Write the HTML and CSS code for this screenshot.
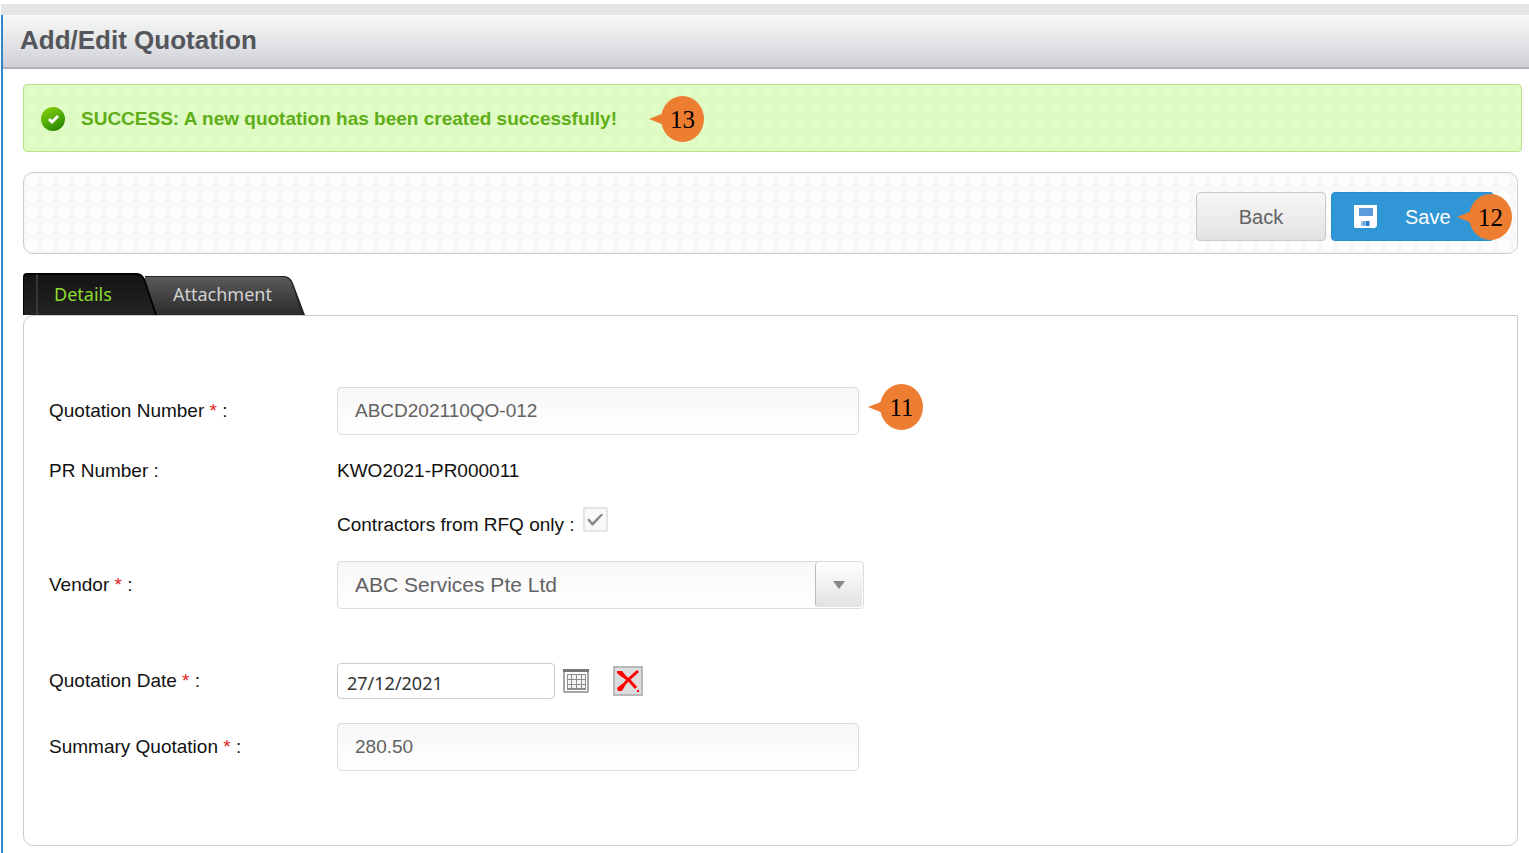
FILE: index.html
```html
<!DOCTYPE html>
<html lang="en">
<head>
    <meta charset="UTF-8">
    <title>Add/Edit Quotation</title>
    <link rel="stylesheet" href="styles.css">
</head>
<body>
    <div class="top-strip"></div>
    <div class="page">
        <header class="page-header">
            <h1>Add/Edit Quotation</h1>
        </header>

        <main class="content">
            <div class="alert" role="status">
                <svg class="alert-icon" viewBox="0 0 24 24">
                    <defs>
                        <linearGradient id="okFill" x1="0" y1="0" x2="0.6" y2="1">
                            <stop offset="0" stop-color="#8ed400"/>
                            <stop offset="0.5" stop-color="#5cb30a"/>
                            <stop offset="1" stop-color="#2d8a00"/>
                        </linearGradient>
                    </defs>
                    <circle cx="12" cy="12" r="12" fill="url(#okFill)"/>
                    <path d="M8 12l3 3 6-6" fill="none" stroke="#fff" stroke-width="3"/>
                </svg>
                <span class="alert-text">SUCCESS: A new quotation has been created successfully!</span>
                <span class="callout">13</span>
            </div>

            <div class="toolbar">
                <button type="button" class="btn">Back</button>
                <button type="submit" form="quotationForm" class="btn btn-save">
                    <svg class="save-icon" viewBox="0 0 24 24">
                        <path d="M0 0h23v21l-2 2H1l-1-1z" fill="#fff"/>
                        <path d="M5 3h14v8H5z" fill="#5c9bdc"/>
                        <path d="M8 16h8v5H7v-4z" fill="#8fbdea"/>
                        <path d="M12 16h3v5h-3z" fill="#2f7ccc"/>
                        <path d="M9 17h2v3H9z" fill="#5c9bdc"/>
                    </svg>
                    Save
                </button>
                <span class="callout callout-over">12</span>
            </div>

            <nav class="tabs">
                <a href="#details" class="tab active">
                    <svg class="tab-shape" viewBox="0 0 134 42" preserveAspectRatio="none">
                        <defs>
                            <linearGradient id="tabDark" x1="0" y1="0" x2="0" y2="1">
                                <stop offset="0" stop-color="#141414"/>
                                <stop offset="1" stop-color="#232323"/>
                            </linearGradient>
                        </defs>
                        <path d="M0 42V4q0-4 4-4h110q5 0 8 6l12 36z" fill="#000"/>
                        <path d="M1 42V5q0-3 4-3h108q5 0 8 6l11 34z" fill="url(#tabDark)"/>
                        <path d="M14 1v41" stroke="#555" stroke-width="1"/>
                    </svg>
                    <span>Details</span>
                </a>
                <a href="#attachment" class="tab">
                    <svg class="tab-shape" viewBox="0 0 160 39" preserveAspectRatio="none">
                        <defs>
                            <linearGradient id="tabGrey" x1="0" y1="0" x2="0" y2="1">
                                <stop offset="0" stop-color="#5a5a5a"/>
                                <stop offset="1" stop-color="#2b2b2b"/>
                            </linearGradient>
                        </defs>
                        <path d="M0 39V0h139q6 0 9 7l12 32z" fill="#222"/>
                        <path d="M0 39V1h138q6 0 9 7l10 31z" fill="url(#tabGrey)"/>
                    </svg>
                    <span>Attachment</span>
                </a>
            </nav>

            <form id="quotationForm" class="panel">
                <div class="form-row">
                    <label for="quotationNumber">Quotation Number <span class="required">*</span> :</label>
                    <div class="field">
                        <input type="text" id="quotationNumber" class="text-input" value="ABCD202110QO-012" readonly>
                        <span class="callout">11</span>
                    </div>
                </div>

                <div class="form-row">
                    <span>PR Number :</span>
                    <div class="field">KWO2021-PR000011</div>
                </div>

                <div class="form-row">
                    <div class="field field-check">
                        <label for="rfqOnly">Contractors from RFQ only :</label>
                        <input type="checkbox" id="rfqOnly" checked>
                    </div>
                </div>

                <div class="form-row">
                    <label for="vendor">Vendor <span class="required">*</span> :</label>
                    <div class="field">
                        <div class="select-box">
                            <select id="vendor">
                                <option>ABC Services Pte Ltd</option>
                            </select>
                            <span class="select-arrow"></span>
                        </div>
                    </div>
                </div>

                <div class="form-row row-date">
                    <label for="quotationDate">Quotation Date <span class="required">*</span> :</label>
                    <div class="field">
                        <input type="text" id="quotationDate" class="date-input" value="27/12/2021">
                        <button type="button" class="icon-btn" aria-label="Choose date">
                            <svg width="26" height="24" viewBox="0 0 26 24">
                                <rect x="1" y="1" width="24" height="22" rx="1" fill="#fff" stroke="#a5a5a5" stroke-width="2"/>
                                <path d="M0 0h26v3H0z" fill="#777"/>
                                <path d="M4 5h19v16H4z" fill="#8c8c8c"/>
                                <path d="M5 6h3v4H5zM9 6h4v4H9zM14 6h4v4h-4zM19 6h3v4h-3zM5 11h3v4H5zM9 11h4v4H9zM14 11h4v4h-4zM19 11h3v4h-3zM5 16h3v3H5zM9 16h4v3H9zM14 16h4v3h-4zM19 16h3v3h-3z" fill="#f4f4f4"/>
                            </svg>
                        </button>
                        <button type="button" class="icon-btn icon-clear" aria-label="Clear date">
                            <svg width="30" height="30" viewBox="0 0 30 30">
                                <rect x="1" y="1" width="28" height="28" fill="#dcdcdc" stroke="#b8b8b8" stroke-width="2"/>
                                <path d="M6 7l10 7 7 8" fill="none" stroke="#f00" stroke-width="3"/>
                                <path d="M25 5l-10 9-9 10" fill="none" stroke="#f00" stroke-width="3"/>
                                <path d="M4 5h5l5 6-2 2-8-6zM4 22l5-4 3 2-3 5H5z" fill="#f00"/>
                                <path d="M24 24h2v2h-2z" fill="#f00"/>
                            </svg>
                        </button>
                    </div>
                </div>

                <div class="form-row">
                    <label for="summary">Summary Quotation <span class="required">*</span> :</label>
                    <div class="field">
                        <input type="text" id="summary" class="text-input" value="280.50" readonly>
                    </div>
                </div>
            </form>
        </main>
    </div>
</body>
</html>
```

FILE: styles.css
```css
* {
    margin: 0;
    padding: 0;
    box-sizing: border-box;
}

body {
    display: flex;
    flex-direction: column;
    min-height: 100vh;
    background: #fff;
    color: #111;
    font-family: "Liberation Sans", Arial, sans-serif;
    font-size: 19px;
    line-height: 24px;
}

input,
select,
button {
    font: inherit;
}

.top-strip {
    height: 11px;
    margin: 4px 0 0 1px;
    background: #e4e5e7;
}

.page {
    flex: 1;
    margin-left: 1px;
    border-left: 2px solid #2e86cc;
}

.page-header {
    padding: 9px 17px 11px;
    background: linear-gradient(#f7f9f8, #d0d1d6);
    border-bottom: 2px solid #b0b1b9;
}

h1 {
    color: #54565b;
    font-size: 26px;
    line-height: 32px;
}

.content {
    padding: 15px 11px 7px 20px;
}

/* success message */
.alert {
    display: flex;
    align-items: center;
    height: 68px;
    margin-right: -4px;
    padding: 2px 17px 0;
    background: radial-gradient(circle, #e1fcc7 5px, #dcfac0 8px, #dffbc5 11px) 0 0 / 16px 16px;
    border: 1px solid #b5e28a;
    border-radius: 4px;
    color: #5fae17;
    font-weight: bold;
}

.alert-icon {
    width: 24px;
    height: 24px;
    margin-right: 16px;
}

.alert .callout {
    margin-left: 44px;
}

/* numbered markers */
.callout {
    position: relative;
    width: 43px;
    height: 46px;
    background: #ed7d31;
    border-radius: 50%;
    color: #000;
    font-family: "Liberation Serif", "Times New Roman", serif;
    font-size: 25px;
    font-weight: normal;
    line-height: 48px;
    text-align: center;
}

.callout::before {
    content: "";
    position: absolute;
    left: -12px;
    top: 17px;
    border: solid transparent;
    border-width: 6px 15px 6px 0;
    border-right-color: #ed7d31;
}

.callout-over {
    position: absolute;
    top: 21px;
    right: 5px;
}

.toolbar {
    position: relative;
    display: flex;
    justify-content: flex-end;
    gap: 5px;
    margin: 20px 0 19px;
    padding: 19px 23px 12px;
    background: radial-gradient(circle, #fefefe 5px, #f6f6f6 8px, #fcfcfc 11px) 0 0 / 16px 16px;
    border: 1px solid #ccc;
    border-radius: 10px;
}

.btn {
    width: 130px;
    height: 49px;
    background: linear-gradient(#f7f6f7, #e4e2e3);
    border: 1px solid #c8c8c8;
    border-radius: 4px;
    color: #626262;
    font-size: 20px;
    cursor: pointer;
}

.btn-save {
    display: flex;
    align-items: center;
    gap: 27px;
    width: 163px;
    padding: 0 22px;
    background: #3096d5;
    border-color: #2b8fce;
    color: #fff;
}

.save-icon {
    width: 24px;
    height: 24px;
}

.tabs {
    display: flex;
    align-items: flex-end;
    font-family: "Noto Sans", "Segoe UI", sans-serif;
    font-size: 18px;
}

.tab {
    position: relative;
    width: 160px;
    height: 39px;
    margin-left: -12px;
    padding: 6px 0 0 28px;
    color: #d2d2d2;
    text-decoration: none;
}

.tab.active {
    z-index: 1;
    width: 134px;
    height: 42px;
    margin-left: 0;
    padding: 9px 0 0 31px;
    color: #8fdc2a;
}

.tab-shape {
    position: absolute;
    left: 0;
    top: 0;
    width: 100%;
    height: 100%;
}

.tab span {
    position: relative;
}

/* form */
.panel {
    display: flex;
    flex-direction: column;
    padding: 71px 25px 74px;
    border: 1px solid #ccc;
    border-radius: 10px 0 10px 10px;
}

.form-row {
    display: grid;
    grid-template-columns: 288px 1fr;
    align-items: center;
    margin-bottom: 24px;
}

.form-row:last-child {
    margin-bottom: 0;
}

.row-date {
    margin-top: 30px;
}

.required {
    color: #e02020;
}

.field {
    grid-column: 2;
    display: flex;
    align-items: center;
}

.field-check {
    align-items: flex-start;
    gap: 8px;
}

.field-check label {
    padding-top: 6px;
}

.text-input {
    width: 522px;
    height: 48px;
    padding: 0 17px;
    background: linear-gradient(#f7f7f7, #fff);
    border: 1px solid #ddd;
    border-radius: 4px;
    color: #626262;
}

.text-input + .callout {
    align-self: flex-start;
    margin: -3px 0 0 21px;
}

#rfqOnly {
    appearance: none;
    display: grid;
    place-items: center;
    width: 25px;
    height: 25px;
    background: #f8f8f8;
    border: 2px solid #e4e4e4;
    border-radius: 2px;
}

#rfqOnly:checked::before {
    content: "";
    width: 16px;
    height: 12px;
    background: #888;
    clip-path: polygon(0 52%, 12% 42%, 34% 72%, 90% 0, 100% 10%, 38% 100%, 30% 100%);
}

.select-box {
    display: grid;
    grid-template-columns: 1fr 48px;
    width: 527px;
    height: 48px;
    background: linear-gradient(#f7f7f7, #fff);
    border: 1px solid #ddd;
    border-radius: 4px;
}

.select-box select {
    grid-area: 1 / 1 / 2 / 3;
    appearance: none;
    padding: 0 17px;
    background: none;
    border: none;
    color: #626262;
    font-size: 21px;
}

.select-arrow {
    grid-area: 1 / 2;
    display: grid;
    place-items: center;
    margin: 0 1px 1px 0;
    background: linear-gradient(#fff, #e2e2e2);
    border-left: 1px solid #bbb;
    border-radius: 4px;
    pointer-events: none;
}

.select-arrow::before {
    content: "";
    border: solid transparent;
    border-width: 8px 6px 0;
    border-top-color: #888;
}

.date-input {
    width: 218px;
    height: 36px;
    padding: 3px 9px 0;
    border: 1px solid #ccc;
    border-radius: 4px;
    color: #333;
    font-family: "Noto Sans", "Segoe UI", sans-serif;
    font-size: 18px;
}

.icon-btn {
    display: flex;
    margin-left: 8px;
    background: none;
    border: none;
    cursor: pointer;
}

.icon-clear {
    margin-left: 24px;
}
```
